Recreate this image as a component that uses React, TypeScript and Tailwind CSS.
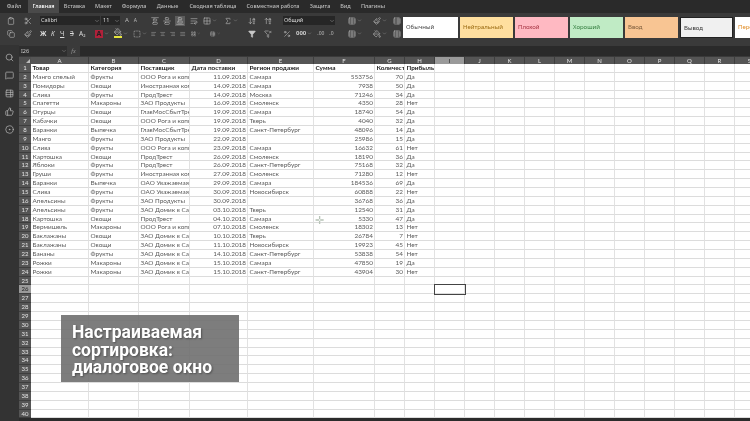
import React from "react";
import {
  AlignCenter,
  AlignJustify,
  AlignLeft,
  AlignRight,
  ArrowDownAZ,
  ArrowUpAZ,
  Clipboard,
  Copy,
  Filter,
  FilterX,
  Grid2x2,
  LayoutGrid,
  MessageSquare,
  PaintBucket,
  Percent,
  Scissors,
  Search,
  Sigma,
  SquareDashed,
  Table,
  TableProperties,
  AlignVerticalJustifyCenter,
  AlignVerticalJustifyEnd,
  AlignVerticalJustifyStart,
  WrapText,
  ThumbsUp,
  CircleDot,
  Paintbrush,
  ChevronDown,
} from "lucide-react";

const TABS = [
  { name: "Файл", cls: "w-[28px]" },
  { name: "Главная", cls: "w-[31px] bg-[#4a4a4a] text-white" },
  { name: "Вставка", cls: "w-[31px]" },
  { name: "Макет", cls: "w-[27px]" },
  { name: "Формула", cls: "w-[34px]" },
  { name: "Данные", cls: "w-[33px]" },
  { name: "Сводная таблица", cls: "w-[58px]" },
  { name: "Совместная работа", cls: "w-[62px]" },
  { name: "Защита", cls: "w-[32px]" },
  { name: "Вид", cls: "w-[19px]" },
  { name: "Плагины", cls: "w-[36px]" },
];

const STYLES = [
  { name: "Обычный", cls: "w-[55px] bg-white text-[#444]" },
  { name: "Нейтральный", cls: "w-[53px] bg-[#ffdf9f] text-[#9a6a10]" },
  { name: "Плохой", cls: "w-[53px] bg-[#ffb9c2] text-[#a5303f]" },
  { name: "Хороший", cls: "w-[53px] bg-[#c0ebc5] text-[#2e7a3a]" },
  { name: "Ввод", cls: "w-[53px] bg-[#f8c593] text-[#7a5a3a]" },
  { name: "Вывод", cls: "w-[53px] bg-[#f0f0f0] text-[#333] border border-[#222]" },
  { name: "Пересчёт", cls: "w-[53px] bg-white text-[#e08a20]" },
];

const COLS = ["A", "B", "C", "D", "E", "F", "G", "H", "I", "J", "K", "L", "M", "N", "O", "P", "Q", "R", "S", "T"];

const HEAD = ["Товар", "Категория", "Поставщик", "Дата поставки", "Регион продажи", "Сумма", "Количество", "Прибыль"];

const ROWS = [
  ["Манго спелый", "Фрукты", "ООО Рога и копыта", "11.09.2018", "Самара", "553756", "70", "Да"],
  ["Помидоры", "Овощи", "Иностранная компания", "14.09.2018", "Самара", "7938", "50", "Да"],
  ["Слива", "Фрукты", "ПродТрест", "14.09.2018", "Москва", "71246", "34", "Да"],
  ["Спагетти", "Макароны", "ЗАО Продукты", "16.09.2018", "Смоленск", "4350", "28", "Нет"],
  ["Огурцы", "Овощи", "ГлавМосСбытТрест", "19.09.2018", "Самара", "18740", "54", "Да"],
  ["Кабачки", "Овощи", "ООО Рога и копыта", "19.09.2018", "Тверь", "4040", "32", "Да"],
  ["Баранки", "Выпечка", "ГлавМосСбытТрест", "19.09.2018", "Санкт-Петербург", "48096", "14", "Да"],
  ["Манго", "Фрукты", "ЗАО Продукты", "22.09.2018", "", "25986", "15", "Да"],
  ["Слива", "Фрукты", "ООО Рога и копыта", "23.09.2018", "Самара", "16632", "61", "Нет"],
  ["Картошка", "Овощи", "ПродТрест", "26.09.2018", "Смоленск", "18190", "36", "Да"],
  ["Яблоки", "Фрукты", "ПродТрест", "26.09.2018", "Санкт-Петербург", "75168", "32", "Да"],
  ["Груши", "Фрукты", "Иностранная компания", "27.09.2018", "Смоленск", "71280", "12", "Нет"],
  ["Баранки", "Выпечка", "ОАО Уважаемая компания", "29.09.2018", "Самара", "184536", "69", "Да"],
  ["Слива", "Фрукты", "ОАО Уважаемая компания", "30.09.2018", "Новосибирск", "60888", "22", "Нет"],
  ["Апельсины", "Фрукты", "ЗАО Продукты", "30.09.2018", "", "36768", "36", "Да"],
  ["Апельсины", "Фрукты", "ЗАО Домик в Саду", "03.10.2018", "Тверь", "12540", "31", "Да"],
  ["Картошка", "Овощи", "ПродТрест", "04.10.2018", "Самара", "5330", "47", "Да"],
  ["Вермишель", "Макароны", "ООО Рога и копыта", "07.10.2018", "Смоленск", "18302", "13", "Нет"],
  ["Баклажаны", "Овощи", "ЗАО Домик в Саду", "10.10.2018", "Тверь", "26784", "7", "Нет"],
  ["Баклажаны", "Овощи", "ЗАО Домик в Саду", "11.10.2018", "Новосибирск", "19923", "45", "Нет"],
  ["Бананы", "Фрукты", "ЗАО Домик в Саду", "14.10.2018", "Санкт-Петербург", "53838", "54", "Нет"],
  ["Рожки", "Макароны", "ЗАО Домик в Саду", "15.10.2018", "Самара", "47850", "19", "Да"],
  ["Рожки", "Макароны", "ЗАО Домик в Саду", "15.10.2018", "Санкт-Петербург", "43904", "30", "Нет"],
];

const ICON = { size: 8, strokeWidth: 1.6 };

function RibbonGroup({ className, top, bottom }: { className: string; top: React.ReactNode; bottom: React.ReactNode }) {
  return (
    <div className={`flex flex-col justify-between h-[22px] shrink-0 ${className}`}>
      <div className="flex items-center gap-[5px] h-[9px]">{top}</div>
      <div className="flex items-center gap-[5px] h-[9px]">{bottom}</div>
    </div>
  );
}

function Caret() {
  return <ChevronDown size={5} strokeWidth={2} className="-ml-[4px] text-[#999]" />;
}

function Ribbon() {
  return (
    <div className="h-[32px] bg-[#3a3a3a] flex items-start pt-[3px] overflow-hidden text-[#c8c8c8]">
      <RibbonGroup
        className="w-[40px] pl-[7px]"
        top={<><Clipboard {...ICON} /><Scissors {...ICON} className="ml-[4px]" /></>}
        bottom={<><Copy {...ICON} /><Paintbrush {...ICON} className="ml-[4px]" /></>}
      />
      <RibbonGroup
        className="w-[108px]"
        top={
          <>
            <div className="w-[60px] h-[9px] bg-[#262626] text-[5.5px] leading-[9px] pl-[1px] text-[#ddd] flex justify-between">
              Calibri<ChevronDown size={6} className="mt-[2px] text-[#999]" />
            </div>
            <div className="-ml-[4px] w-[19px] h-[9px] bg-[#262626] text-[5.5px] leading-[9px] pl-[2px] text-[#ddd] flex justify-between">
              11<ChevronDown size={6} className="mt-[2px] text-[#999]" />
            </div>
            <span className="text-[6px] text-[#bbb]">A</span>
            <span className="text-[5px] text-[#bbb]">A</span>
          </>
        }
        bottom={
          <>
            <span className="text-[6.5px] font-bold w-[6px] text-[#ddd]">Ж</span>
            <span className="text-[6.5px] italic w-[4px] text-[#ddd]">К</span>
            <span className="text-[6.5px] underline w-[5px] text-[#ddd]">Ч</span>
            <span className="text-[6.5px] line-through w-[4px] text-[#ddd]">З</span>
            <span className="text-[6.5px] w-[6px] text-[#ddd]">A₂</span>
            <span className="ml-[5px] text-[7px] font-bold w-[8px] text-center bg-[#b0213a] text-[#222] leading-[8px]">A</span>
            <Caret />
            <PaintBucket size={8} strokeWidth={1.6} className="text-[#ddd] border-b-2 border-[#e6e63c] box-content -mt-[1px]" />
            <Caret />
            <SquareDashed {...ICON} />
            <Caret />
          </>
        }
      />
      <RibbonGroup
        className="w-[72px] pl-[3px]"
        top={
          <>
            <AlignVerticalJustifyStart {...ICON} />
            <AlignVerticalJustifyCenter {...ICON} className="-ml-[1px]" />
            <div className="bg-[#5c5c5c] p-[1px] -my-[1px] -ml-[1px]"><AlignVerticalJustifyEnd {...ICON} /></div>
            <WrapText {...ICON} />
            <Grid2x2 {...ICON} />
            <Caret />
          </>
        }
        bottom={
          <>
            <AlignLeft {...ICON} />
            <AlignCenter {...ICON} className="-ml-[1px]" />
            <AlignRight {...ICON} className="-ml-[1px]" />
            <AlignJustify {...ICON} />
            <LayoutGrid {...ICON} />
            <Caret />
            <TableProperties {...ICON} className="ml-[5px]" />
            <Caret />
          </>
        }
      />
      <RibbonGroup
        className="w-[24px] pl-[4px]"
        top={<><Sigma {...ICON} /><Caret /></>}
        bottom={null}
      />
      <RibbonGroup
        className="w-[39px] pl-[4px]"
        top={<><ArrowDownAZ {...ICON} /><ArrowUpAZ {...ICON} className="ml-[3px]" /></>}
        bottom={<><Filter size={8} strokeWidth={1.6} fill="#c8c8c8" /><FilterX {...ICON} className="ml-[3px]" /></>}
      />
      <RibbonGroup
        className="w-[61px]"
        top={
          <div className="w-[52px] h-[9px] bg-[#262626] text-[5.5px] leading-[9px] pl-[1px] text-[#ddd] flex justify-between">
            Общий<ChevronDown size={6} className="mt-[2px] text-[#999]" />
          </div>
        }
        bottom={
          <>
            <Percent {...ICON} />
            <span className="text-[6px] font-bold text-[#ccc]">000</span>
            <Caret />
            <span className="text-[5px] text-[#bbb]">.00</span>
            <span className="text-[5px] text-[#bbb]">.0</span>
          </>
        }
      />
      <RibbonGroup
        className="w-[29px] pl-[4px]"
        top={<><Table {...ICON} /><Caret /></>}
        bottom={<><Table {...ICON} /><Caret /></>}
      />
      <RibbonGroup
        className="w-[28px]"
        top={<><Paintbrush {...ICON} /><Caret /><TableProperties {...ICON} className="ml-[1px]" /></>}
        bottom={<><PaintBucket {...ICON} /><Caret /><Table {...ICON} className="ml-[1px]" /></>}
      />
      <div className="flex gap-[1px] pl-[2px] mt-[1px] shrink-0">
        {STYLES.map((s) => (
          <div key={s.name} className={`h-[21px] shrink-0 mr-[1px] text-[6px] leading-[21px] pl-[3px] overflow-hidden whitespace-nowrap ${s.cls}`}>
            {s.name}
          </div>
        ))}
      </div>
    </div>
  );
}

function Sheet() {
  const cellBase = "border-r border-b border-r-[#e2e2e2] border-b-[#dcdcdc] overflow-hidden whitespace-nowrap h-full leading-[8px]";
  return (
    <div className="grid h-[361px] overflow-hidden grid-cols-[12px_58px_50px_51px_58px_66px_61px_30px_30px_30px_30px_30px_30px_30px_30px_30px_30px_30px_30px_30px_30px] grid-rows-[7px_repeat(40,8.86px)] bg-white text-[6.4px] font-['Lato','Noto_Sans',sans-serif]">
      <div className="bg-[#505050] flex items-end justify-end pr-[1px] pb-[1px]">
        <div className="w-0 h-0 border-l-[4px] border-l-transparent border-b-[4px] border-b-[#bbb]" />
      </div>
      {COLS.map((c) => (
        <div
          key={c}
          className={`border-r border-[#3e3e3e] text-center leading-[7px] text-[6px] ${c === "I" ? "bg-[#9a9a9a] text-[#222]" : "bg-[#555] text-[#e4e4e4]"}`}
        >
          {c}
        </div>
      ))}
      {Array.from({ length: 40 }, (_, r) => {
        const rowNo = r + 1;
        const values = r === 0 ? HEAD : ROWS[r - 1];
        return (
          <React.Fragment key={rowNo}>
            <div
              className={`text-center leading-[8.86px] text-[6px] border-b border-[#3e3e3e] ${rowNo === 26 ? "bg-[#9a9a9a] text-[#222]" : "bg-[#555] text-[#e4e4e4]"}`}
            >
              {rowNo}
            </div>
            {COLS.map((c, i) => {
              const v = values?.[i] ?? "";
              const right = r > 0 && (i === 3 || i === 5 || i === 6);
              const selected = rowNo === 26 && c === "I";
              return (
                <div
                  key={c}
                  className={`${cellBase} ${right ? "text-right pr-[1px]" : "pl-[1.5px]"} ${r === 0 ? "font-bold text-[#222]" : "text-[#5a5a5a]"} ${selected ? "outline outline-[1px] outline-[#444] z-10" : ""}`}
                >
                  {v}
                </div>
              );
            })}
          </React.Fragment>
        );
      })}
    </div>
  );
}

export default function App() {
  return (
    <div className="relative w-[750px] h-[421px] overflow-hidden bg-[#2b2b2b] font-['Noto_Sans',sans-serif] blur-[0.35px]">
      {/* Tabs */}
      <div className="h-[13px] flex bg-[#2a2a2a] text-[5.5px] leading-[12px] font-medium text-[#bdbdbd]">
        {TABS.map((t) => (
          <div key={t.name} className={`text-center whitespace-nowrap shrink-0 ${t.cls}`}>
            {t.name}
          </div>
        ))}
      </div>

      <Ribbon />

      <div className="flex">
        {/* Side panel */}
        <div className="w-[19px] h-[376px] bg-[#333] flex flex-col items-center text-[#bdbdbd] pr-[1px] pt-[8px]">
          <Search size={9} strokeWidth={1.8} className="mb-[9px]" />
          <MessageSquare size={9} strokeWidth={1.8} className="mb-[9px]" />
          <TableProperties size={9} strokeWidth={1.8} className="mb-[9px]" />
          <ThumbsUp size={9} strokeWidth={1.8} className="mb-[9px]" />
          <CircleDot size={9} strokeWidth={1.8} />
        </div>
        <div className="flex-1 min-w-0 overflow-hidden">
          {/* Formula bar */}
          <div className="h-[12px] flex items-center bg-[#3a3a3a] text-[5.5px] text-[#ccc]">
            <div className="w-[48px] h-[10px] bg-[#2e2e2e] leading-[10px] pl-[2px] flex justify-between">
              I26<ChevronDown size={6} className="mt-[2px] text-[#888]" />
            </div>
            <div className="w-[13px] text-center italic font-['Liberation_Serif',serif] text-[6px] text-[#999]">fx</div>
            <div className="flex-1 h-[10px] bg-[#2a2a2a]" />
          </div>
          <Sheet />
        </div>
      </div>

      {/* Cursor over the grid */}
      <div className="absolute left-[315px] top-[215px] w-[9px] h-[9px] text-[#b8c4b8] text-[11px] leading-[9px] text-center">✛</div>

      {/* Caption over the sheet */}
      <div className="absolute left-[61px] top-[315px] w-[178px] h-[67px] bg-[#6f6f6f]/90 pl-[11px] pt-[9px] font-['Roboto',sans-serif] font-bold text-white text-[17.5px] leading-[17.6px] [text-shadow:1px_1px_2px_rgba(0,0,0,0.35)]">
        Настраиваемая
        <br />
        сортировка:
        <br />
        диалоговое окно
      </div>
    </div>
  );
}
